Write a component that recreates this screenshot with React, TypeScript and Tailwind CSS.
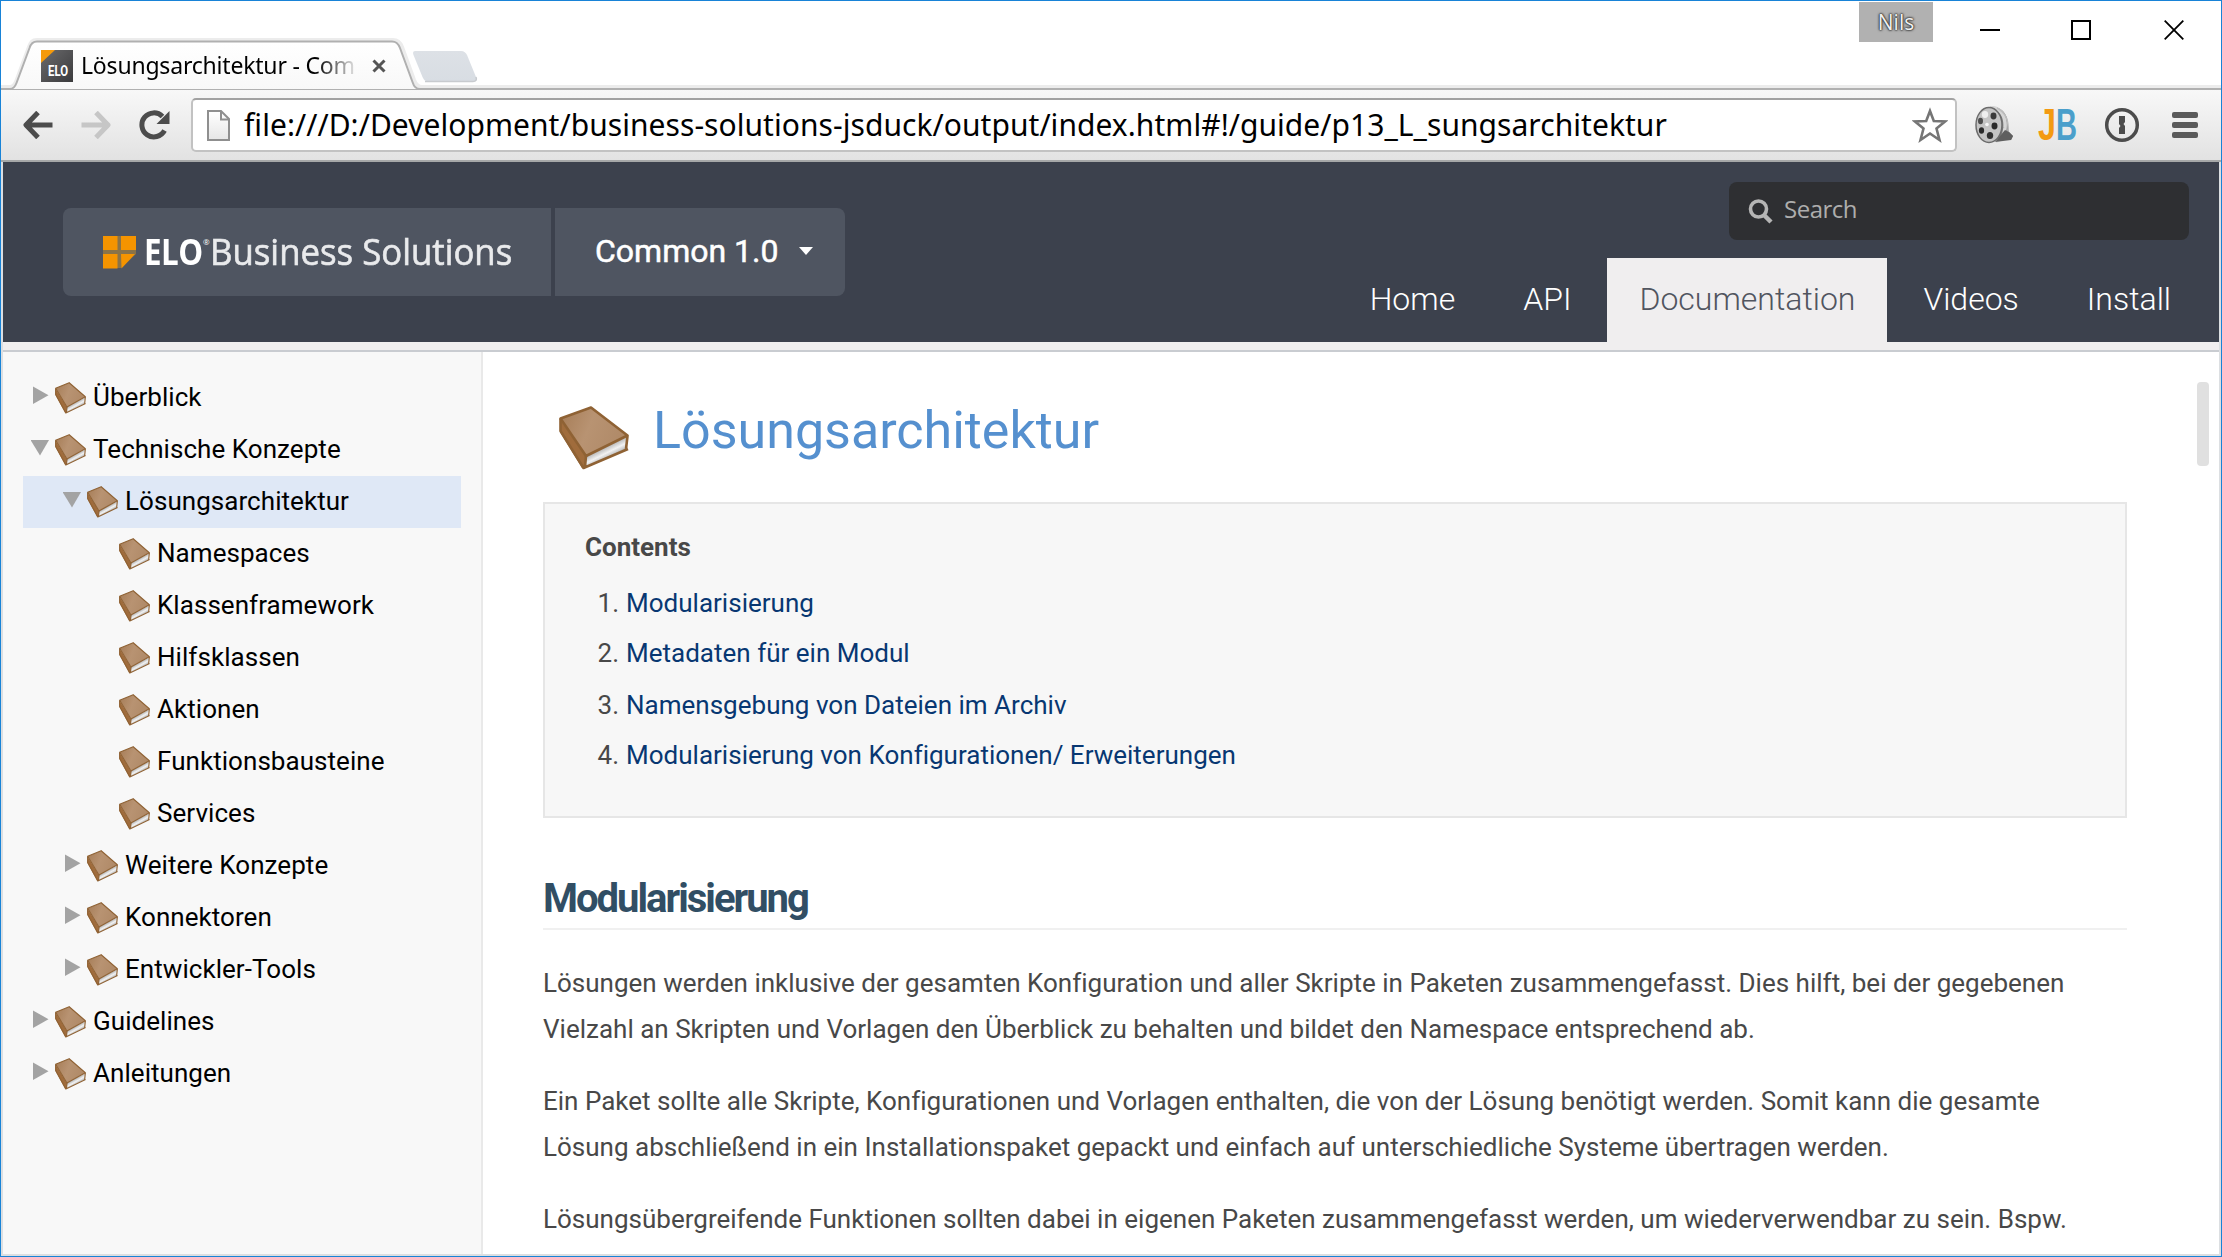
type Node = { label: string; depth: number; state?: 'open' | 'closed'; active?: boolean };

const TREE: Node[] = [
  { label: 'Überblick', depth: 0, state: 'closed' },
  { label: 'Technische Konzepte', depth: 0, state: 'open' },
  { label: 'Lösungsarchitektur', depth: 1, state: 'open', active: true },
  { label: 'Namespaces', depth: 2 },
  { label: 'Klassenframework', depth: 2 },
  { label: 'Hilfsklassen', depth: 2 },
  { label: 'Aktionen', depth: 2 },
  { label: 'Funktionsbausteine', depth: 2 },
  { label: 'Services', depth: 2 },
  { label: 'Weitere Konzepte', depth: 1, state: 'closed' },
  { label: 'Konnektoren', depth: 1, state: 'closed' },
  { label: 'Entwickler-Tools', depth: 1, state: 'closed' },
  { label: 'Guidelines', depth: 0, state: 'closed' },
  { label: 'Anleitungen', depth: 0, state: 'closed' },
];

const INDENT = ['pl-[8px]', 'pl-[40px]', 'pl-[74px]'];

const TOC = [
  'Modularisierung',
  'Metadaten für ein Modul',
  'Namensgebung von Dateien im Archiv',
  'Modularisierung von Konfigurationen/ Erweiterungen',
];

const PARAGRAPHS = [
  [
    'Lösungen werden inklusive der gesamten Konfiguration und aller Skripte in Paketen zusammengefasst. Dies hilft, bei der gegebenen',
    'Vielzahl an Skripten und Vorlagen den Überblick zu behalten und bildet den Namespace entsprechend ab.',
  ],
  [
    'Ein Paket sollte alle Skripte, Konfigurationen und Vorlagen enthalten, die von der Lösung benötigt werden. Somit kann die gesamte',
    'Lösung abschließend in ein Installationspaket gepackt und einfach auf unterschiedliche Systeme übertragen werden.',
  ],
  [
    'Lösungsübergreifende Funktionen sollten dabei in eigenen Paketen zusammengefasst werden, um wiederverwendbar zu sein. Bspw.',
  ],
];

const NAV = ['Home', 'API', 'Documentation', 'Videos', 'Install'];

function Book({ className }: { className: string }) {
  return (
    <svg className={className} viewBox="0 0 70 64" preserveAspectRatio="none" aria-hidden="true">
      <defs>
        <linearGradient id="cover" x1="0" y1="0" x2="1" y2="0.3">
          <stop offset="0" stopColor="#a67c56" />
          <stop offset="0.5" stopColor="#b89372" />
          <stop offset="1" stopColor="#b08a68" />
        </linearGradient>
        <linearGradient id="pages" gradientUnits="userSpaceOnUse" x1="44" y1="42" x2="50" y2="54">
          <stop offset="0" stopColor="#b4b4b4" />
          <stop offset="0.45" stopColor="#f2f2f2" />
          <stop offset="0.7" stopColor="#cccccc" />
          <stop offset="1" stopColor="#787878" />
        </linearGradient>
      </defs>
      <path d="M27 50 L68 31 L67 43 L26 61 Z" fill="url(#pages)" />
      <path d="M1 13 L27 50 L26 62 L23 62 L1 26 Z" fill="#a06c3c" />
      <path d="M1.5 12.5 L32 1.5 L68.5 29.5 L27 50 Z" fill="url(#cover)" stroke="#8f6234" strokeWidth="2.600" strokeLinejoin="round" />
      <path d="M1.5 13 V25 L24.5 62 L69 43 M27 50 L26 61 M68.5 30 L67 43" fill="none" stroke="#8f6234" strokeWidth="2.6" strokeLinejoin="round" />
    </svg>
  );
}

function Toggle({ state }: { state?: 'open' | 'closed' }) {
  return (
    <svg className="mb-[7px] h-[18px] w-[18px] shrink-0" viewBox="0 0 18 18" aria-hidden="true">
      {state === 'closed' && <path d="M2 0.5 V18 L17.5 9.2 Z" fill="#a3a3a3" />}
      {state === 'open' && <path d="M-0.5 2 H18 L9 17.5 Z" fill="#a3a3a3" />}
    </svg>
  );
}

function TabStrip() {
  return (
    <div className="relative flex h-[89px] items-start justify-between bg-white">
      <svg className="absolute left-0 top-[32px] h-[57px] w-full" aria-hidden="true">
        <defs>
          <linearGradient id="tab" x1="0" y1="0" x2="0" y2="1">
            <stop offset="0" stopColor="#ffffff" />
            <stop offset="1" stopColor="#f8f8f8" />
          </linearGradient>
          <linearGradient id="newtab" x1="0" y1="0" x2="0" y2="1">
            <stop offset="0" stopColor="#dde1e6" />
            <stop offset="1" stopColor="#d8dde3" />
          </linearGradient>
        </defs>
        <path d="M0 54 H9 C12 54 13.500 52 15 49 L28 14 C30 9 31 7 36 7 H392 C397 7 399 9 401 14 L413 47 C415 52 417 54 421 54 H2220" fill="none" stroke="#ececec" strokeWidth="4" />
        <path d="M0 57 V56 H9 C12 56 14 54 15.500 50 L28.500 15 C30 10 32 8.500 36 8.500 H391 C395 8.500 397 10 399 15 L411.500 49 C413 54 416 56 419 56 H2220 V57 Z" fill="url(#tab)" stroke="#b0b0b0" strokeWidth="2" />
        <path d="M415 18 H460 C463 18 465 20 466 22 L475 44 C476 47 475 48.500 472 48.500 H428 C424 48.500 423 47 421.500 44 L412.500 22 C411.500 19.500 412 18 415 18 Z" fill="url(#newtab)" />
        <path d="M424 48.500 H472 C475 48.500 476 47 475 44" fill="none" stroke="#c8cbcf" strokeWidth="1.500" />
      </svg>

      <div className="relative flex items-center pl-[40px] pt-[49px]">
        <svg className="h-8 w-8" viewBox="0 0 32 32" aria-hidden="true">
          <defs>
            <linearGradient id="fav" x1="0" y1="0" x2="1" y2="1">
              <stop offset="0" stopColor="#6b6b6d" />
              <stop offset="1" stopColor="#3a3a3c" />
            </linearGradient>
          </defs>
          <rect width="32" height="32" fill="url(#fav)" />
          <path d="M0 0 H14 L0 13 Z" fill="#f59a0b" />
          <text x="7" y="26" textLength="20" lengthAdjust="spacingAndGlyphs" fill="#ffffff" className="font-['Roboto',sans-serif] text-[14px] font-bold">ELO</text>
        </svg>
        <div className="ml-[8px] h-8 w-[274px] overflow-hidden whitespace-nowrap bg-linear-to-r from-black from-86% to-black/10 bg-clip-text font-['Noto_Sans',sans-serif] text-[23px] leading-[30px] tracking-[-0.2px] text-transparent">
          Lösungsarchitektur - Com
        </div>
        <svg className="ml-[17px] h-[14px] w-[14px]" viewBox="0 0 14 14" aria-hidden="true">
          <path d="M1.500 1.500 L12.500 12.500 M12.500 1.500 L1.500 12.500" stroke="#555" strokeWidth="3" />
        </svg>
      </div>

      <div className="relative flex items-start pr-[37px] pt-[1px]">
        <div className="h-10 w-[74px] bg-[#b1b1b1] text-center font-['Open_Sans',sans-serif] text-[21px] leading-[40px] text-[#f0f0f0] [text-shadow:0_0_2px_#333,0_0_2px_#333,0_0_1px_#444,0_0_3px_#555]">Nils</div>
        <svg className="ml-[47px] mt-[18px] h-[20px] w-[20px]" viewBox="0 0 20 20" aria-hidden="true">
          <path d="M0 10 H20" stroke="#000" strokeWidth="2" />
        </svg>
        <div className="ml-[71px] mt-[18px] h-[20px] w-[20px] border-2 border-black" />
        <svg className="ml-[73px] mt-[18px] h-[20px] w-[20px]" viewBox="0 0 20 20" aria-hidden="true">
          <path d="M0.700 0.700 L19.300 19.300 M19.300 0.700 L0.700 19.300" stroke="#000" strokeWidth="1.800" />
        </svg>
      </div>
    </div>
  );
}

function Toolbar() {
  return (
    <div className="flex h-[72px] items-start border-b-2 border-[#a6a8a8] bg-linear-to-b from-[#f8f8f8] to-[#e2e2e2] pl-[22px]">
      <svg className="mt-[21px] h-[28px] w-[30px]" viewBox="0 0 30 28" aria-hidden="true">
        <path d="M15 1.500 L3 14 L15 26.500 M3.500 14 H29.500" fill="none" stroke="#4c4c4c" strokeWidth="5" strokeLinejoin="round" />
      </svg>
      <svg className="ml-[28px] mt-[21px] h-[28px] w-[30px]" viewBox="0 0 30 28" aria-hidden="true">
        <path d="M15 1.500 L27 14 L15 26.500 M0.500 14 H26.500" fill="none" stroke="#c6c6c6" strokeWidth="5" strokeLinejoin="round" />
      </svg>
      <svg className="ml-[28px] mt-[20px] h-[30px] w-[31px]" viewBox="0 0 31 30" aria-hidden="true">
        <path d="M25.500 20.500 A12 12 0 1 1 23.500 6.500" fill="none" stroke="#4c4c4c" strokeWidth="5" />
        <path d="M30.500 1 V14 H17.500 Z" fill="#4c4c4c" />
      </svg>
      <div className="ml-[21px] mt-[8px] flex h-[54px] w-[1766px] items-center rounded-[5px] border-2 border-[#c2c2c2] border-t-[#a2a2a2] bg-white pl-[14px] pr-[7px]">
        <svg className="h-[31px] w-[23px]" viewBox="0 0 23 31" aria-hidden="true">
          <defs>
            <linearGradient id="sheet" x1="0" y1="0" x2="0" y2="1">
              <stop offset="0" stopColor="#ffffff" />
              <stop offset="1" stopColor="#e6e6e6" />
            </linearGradient>
          </defs>
          <path d="M1 1 H14 L22 9 V30 H1 Z" fill="url(#sheet)" stroke="#8f8f8f" strokeWidth="2" />
          <path d="M14 1 V9.500 H22" fill="none" stroke="#8f8f8f" strokeWidth="2" />
        </svg>
        <div className="ml-[14px] whitespace-nowrap font-['Noto_Sans',sans-serif] text-[30px] leading-[44px] tracking-[0.05px] text-black">
          file:///D:/Development/business-solutions-jsduck/output/index.html#!/guide/p13_L_sungsarchitektur
        </div>
        <svg className="ml-auto h-[37px] w-[36px]" viewBox="0 0 36 37" aria-hidden="true">
          <path d="M18 4 L21.800 14 L33 14.500 L24.500 21.500 L27.500 33 L18 26.500 L8.500 33 L11.500 21.500 L3 14.500 L14.200 14 Z" fill="#ffffff" stroke="#757575" strokeWidth="2.600" />
        </svg>
      </div>
      <svg className="ml-[18px] mt-[16px] h-[38px] w-[38px]" viewBox="0 0 38 38" aria-hidden="true">
        <path d="M12 2 C20 -1 29 2 32 12 L34 26 L38 30 L36 34 H22 L12 37 Z" fill="#7c7c7c" />
        <path d="M15 1.500 C26 1 31 11 30 22 C29 30 27 34 21 35" fill="none" stroke="#d6d6d6" strokeWidth="3.500" />
        <path d="M22 2 C30 6 34 14 33 26" fill="none" stroke="#bdbdbd" strokeWidth="1.500" />
        <path d="M20 36 L30 24 L34 26 L38 30 L36 34 Z" fill="#5f5f5f" />
        <ellipse cx="14" cy="19" rx="13" ry="17.500" fill="#c4c4c4" stroke="#6c6c6c" strokeWidth="1.500" />
        <ellipse cx="10" cy="8.500" rx="3.200" ry="3.400" fill="#efefef" />
        <ellipse cx="18.500" cy="10" rx="3" ry="3.400" fill="#3a3a3a" />
        <ellipse cx="5.500" cy="15" rx="2.500" ry="3.200" fill="#4c4c4c" />
        <ellipse cx="19.500" cy="20" rx="3" ry="3.400" fill="#2a2a2a" />
        <ellipse cx="6.500" cy="24.500" rx="2.600" ry="3.300" fill="#2a2a2a" />
        <ellipse cx="15" cy="29.500" rx="3.200" ry="3.500" fill="#303030" />
        <circle cx="12" cy="18.500" r="1.800" fill="#f5f5f5" />
      </svg>
      <svg className="ml-[25px] mt-[6px] h-[56px] w-[40px]" viewBox="0 0 40 56" aria-hidden="true">
        <text x="0" y="44" textLength="18" lengthAdjust="spacingAndGlyphs" fill="#f39a12" className="font-['Liberation_Sans',sans-serif] text-[44px] font-bold">J</text>
        <text x="18" y="44" textLength="21" lengthAdjust="spacingAndGlyphs" fill="#4b9fcb" className="font-['Liberation_Sans',sans-serif] text-[44px] font-bold">B</text>
      </svg>
      <svg className="ml-[26px] mt-[17px] h-[36px] w-[36px]" viewBox="0 0 36 36" aria-hidden="true">
        <circle cx="18" cy="18" r="15.300" fill="none" stroke="#4c4c4c" strokeWidth="3.500" />
        <path d="M15 9 H21 V15 L19.500 17 L21 19 V27 H15 V21 L16.500 19 L15 17 Z" fill="#4c4c4c" />
      </svg>
      <div className="ml-[32px] mt-[22px] flex w-[26px] flex-col gap-[4px]">
        <div className="h-[6px] rounded-[2px] bg-[#5a5a5a]" />
        <div className="h-[6px] rounded-[2px] bg-[#5a5a5a]" />
        <div className="h-[6px] rounded-[2px] bg-[#5a5a5a]" />
      </div>
    </div>
  );
}

function Header() {
  return (
    <header className="flex h-[180px] justify-between bg-[#3c414d] pl-[60px]">
      <div className="flex items-start gap-[4px] pt-[46px]">
        <div className="flex h-[88px] w-[488px] items-center rounded-l-[8px] bg-[#4f5561] pl-[40px] font-['Open_Sans',sans-serif] leading-none">
          <svg className="h-[33px] w-[33px]" viewBox="0 0 33 33" aria-hidden="true">
            <rect width="33" height="32" fill="#8a7348" />
            <path d="M17 33 H33 V18 Z" fill="#4f5561" />
            <rect width="14.500" height="14" fill="#f59400" />
            <rect x="18" width="15" height="14" fill="#f59400" />
            <rect y="18" width="14.500" height="14.500" fill="#f59400" />
            <path d="M18 18 H32 L18.500 32.500 Z" fill="#f59400" />
          </svg>
          <span className="ml-[8px] inline-block w-[59px] origin-left scale-x-[0.87] text-[36px] font-bold tracking-[-0.5px] text-white">ELO</span>
          <span className="-mt-[20px] w-[6px] text-[8px] text-white">®</span>
          <span className="ml-[1px] inline-block origin-left scale-x-[0.966] whitespace-nowrap text-[36px] text-[#e9eaec] [-webkit-text-stroke:0.6px_#e9eaec]">Business Solutions</span>
        </div>
        <div className="flex h-[88px] w-[290px] items-center rounded-r-[8px] bg-[#4f5561] pl-[40px]">
          <span className="-mt-[2px] whitespace-nowrap text-[32px] font-normal text-white [-webkit-text-stroke:0.5px_#fff]">Common 1.0</span>
          <svg className="-mt-[2px] ml-[21px] h-[8px] w-[14px]" viewBox="0 0 14 8" aria-hidden="true">
            <path d="M0 0 H14 L7 8 Z" fill="#fff" />
          </svg>
        </div>
      </div>
      <div className="flex flex-col items-end pt-[20px]">
        <div className="mr-[30px] flex h-[58px] w-[460px] items-center rounded-[8px] bg-[#2e2f32] pl-[19px]">
          <svg className="h-[25px] w-[25px]" viewBox="0 0 25 25" aria-hidden="true">
            <circle cx="10.500" cy="10" r="8" fill="none" stroke="#b5b5b5" strokeWidth="3.600" />
            <path d="M16 16 L23 23" stroke="#b5b5b5" strokeWidth="4.500" />
          </svg>
          <span className="-mt-[4px] ml-[11px] font-['Open_Sans',sans-serif] text-[24px] tracking-[-0.5px] text-[#adadad]">Search</span>
        </div>
        <nav className="mr-[16px] mt-[18px] flex gap-[4px]">
          {NAV.map((item) =>
            item === 'Documentation' ? (
              <a key={item} className="h-[84px] bg-[#f0eeef] px-[32px] text-[32px] font-light leading-[82px] text-[#51555f]">{item}</a>
            ) : (
              <a key={item} className="h-[84px] px-[32px] text-[32px] font-light leading-[82px] text-white">{item}</a>
            ),
          )}
        </nav>
      </div>
    </header>
  );
}

function Sidebar() {
  return (
    <aside className="w-[480px] shrink-0 border-r-2 border-[#e9e9e9] bg-[#f8f8f8] pl-[20px] pr-[20px] pt-[20px]">
      {TREE.map((node) => (
        <div
          key={node.label}
          className={`flex h-[52px] items-center ${INDENT[node.depth]} ${node.active ? 'bg-[#dfe8f6]' : ''}`}
        >
          {node.depth < 2 && <Toggle state={node.state} />}
          <Book className={`h-[32px] w-[31px] shrink-0 ${node.depth < 2 ? 'ml-[6px]' : 'ml-[22px]'}`} />
          <span className="-mt-[2px] ml-[7px] whitespace-nowrap text-[26px] leading-[52px] tracking-[0.050px] text-black">{node.label}</span>
        </div>
      ))}
    </aside>
  );
}

function Article() {
  return (
    <main className="flex min-w-0 flex-1 justify-between overflow-hidden bg-white pl-[60px] pr-[10px]">
      <article className="w-[1584px] shrink-0 text-[26px] text-[#484848]">
        <div className="flex h-[150px] items-start">
          <Book className="ml-[16px] mt-[54px] h-[64px] w-[70px]" />
          <h1 className="ml-[24px] mt-[49px] text-[52px] leading-[60px] text-[#5590cf]">Lösungsarchitektur</h1>
        </div>
        <section className="h-[316px] border-2 border-[#e6e6e6] bg-[#f7f7f7] pl-[40px] pt-[20px]">
          <p className="font-bold leading-[46px]">Contents</p>
          <ol className="mt-[8px]">
            {TOC.map((item, i) => (
              <li key={item} className="flex leading-[50px] even:pb-[2px]">
                <span className="w-[34px] text-right">{i + 1}.</span>
                <a className="ml-[7px] tracking-[0.010px] text-[#083772]">{item}</a>
              </li>
            ))}
          </ol>
        </section>
        <h2 className="mt-[58px] h-[54px] border-b-2 border-[#f0f0f0] text-[40px] font-bold leading-[46px] tracking-[-2px] text-[#314e64]">Modularisierung</h2>
        <div className="mt-[30px] flex flex-col gap-[26px] whitespace-nowrap leading-[46px] tracking-[0.006px]">
          {PARAGRAPHS.map((lines) => (
            <p key={lines[0]}>
              {lines.map((line) => (
                <span key={line} className="block">{line}</span>
              ))}
            </p>
          ))}
        </div>
      </article>
      <div className="mt-[30px] h-[84px] w-[12px] rounded-[4px] bg-[#e0e0e0]" />
    </main>
  );
}

export default function App() {
  return (
    <div className="flex h-[1257px] w-[2222px] flex-col overflow-hidden border border-[#1883d7] bg-white font-['Roboto',sans-serif]">
      <TabStrip />
      <Toolbar />
      <div className="flex min-h-0 flex-1 flex-col overflow-hidden border-x-2 border-b-2 border-[#dcdfe2]">
        <Header />
        <div className="h-[10px] shrink-0 border-b-2 border-[#c9ccd1] bg-[#f0eeef]" />
        <div className="flex min-h-0 flex-1">
          <Sidebar />
          <Article />
        </div>
      </div>
    </div>
  );
}
